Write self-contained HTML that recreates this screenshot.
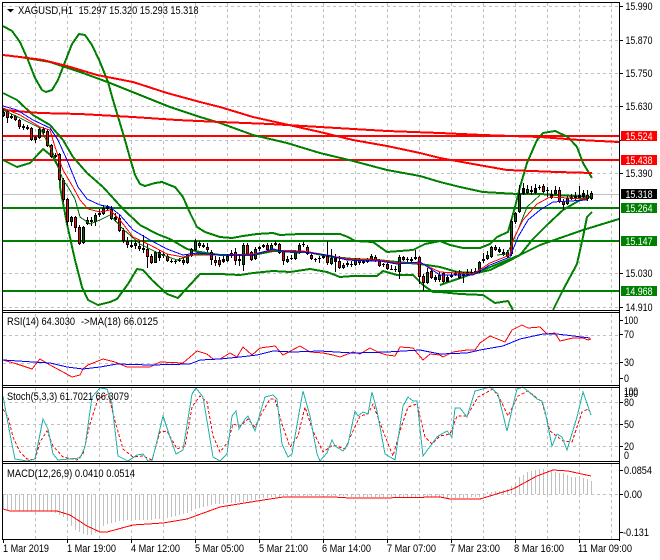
<!DOCTYPE html>
<html><head><meta charset="utf-8"><style>
html,body{margin:0;padding:0;background:#fff;width:660px;height:560px;overflow:hidden}
svg{display:block}
text{font-family:"Liberation Sans",sans-serif;font-size:11px;fill:#000}
.w{fill:#fff}
</style></head><body>
<svg width="660" height="560" viewBox="0 0 660 560" xmlns="http://www.w3.org/2000/svg">
<rect width="660" height="560" fill="#fff"/>
<!-- grid -->
<g stroke="#c0c0c0" stroke-width="1" stroke-dasharray="3 3" fill="none" shape-rendering="crispEdges">
<path d="M35.5 3V311M67.5 3V311M99.5 3V311M131.5 3V311M163.5 3V311M195.5 3V311M227.5 3V311M259.5 3V311M291.5 3V311M323.5 3V311M355.5 3V311M387.5 3V311M419.5 3V311M451.5 3V311M483.5 3V311M515.5 3V311M547.5 3V311M579.5 3V311M611.5 3V311"/>
<path d="M35.5 314V385M67.5 314V385M99.5 314V385M131.5 314V385M163.5 314V385M195.5 314V385M227.5 314V385M259.5 314V385M291.5 314V385M323.5 314V385M355.5 314V385M387.5 314V385M419.5 314V385M451.5 314V385M483.5 314V385M515.5 314V385M547.5 314V385M579.5 314V385M611.5 314V385"/>
<path d="M35.5 388V461M67.5 388V461M99.5 388V461M131.5 388V461M163.5 388V461M195.5 388V461M227.5 388V461M259.5 388V461M291.5 388V461M323.5 388V461M355.5 388V461M387.5 388V461M419.5 388V461M451.5 388V461M483.5 388V461M515.5 388V461M547.5 388V461M579.5 388V461M611.5 388V461"/>
<path d="M35.5 464V539M67.5 464V539M99.5 464V539M131.5 464V539M163.5 464V539M195.5 464V539M227.5 464V539M259.5 464V539M291.5 464V539M323.5 464V539M355.5 464V539M387.5 464V539M419.5 464V539M451.5 464V539M483.5 464V539M515.5 464V539M547.5 464V539M579.5 464V539M611.5 464V539"/>
<path d="M3 6.5H619M3 40.5H619M3 73.5H619M3 106.5H619M3 140.5H619M3 173.5H619M3 273.5H619M3 307.5H619M3 335.5H619M3 363.5H619M3 402.5H619M3 424.5H619M3 446.5H619M3 494.5H619"/>
</g>
<path d="M3 194.5H619" stroke="#c0c0c0" stroke-width="1" shape-rendering="crispEdges"/>
<!-- histogram -->
<path fill="none" stroke="#c0c0c0" stroke-width="1" shape-rendering="crispEdges" d="M3.5 494V509M7.5 494V510M11.5 494V510M15.5 494V510M19.5 494V511M23.5 494V511M27.5 494V511M31.5 494V511M35.5 494V511M39.5 494V511M43.5 494V511M47.5 494V511M51.5 494V512M55.5 494V513M59.5 494V515M63.5 494V517M67.5 494V521M71.5 494V526M75.5 494V530M79.5 494V532M83.5 494V534M87.5 494V535M91.5 494V535M95.5 494V533M99.5 494V530M103.5 494V526M107.5 494V524M111.5 494V523M115.5 494V522M119.5 494V521M123.5 494V521M127.5 494V520M131.5 494V520M135.5 494V520M139.5 494V520M143.5 494V520M147.5 494V520M151.5 494V520M155.5 494V519M159.5 494V519M163.5 494V519M167.5 494V518M171.5 494V517M175.5 494V516M179.5 494V515M183.5 494V514M187.5 494V513M191.5 494V511M195.5 494V509M199.5 494V508M203.5 494V507M207.5 494V506M211.5 494V505M215.5 494V504M219.5 494V504M223.5 494V504M227.5 494V503M231.5 494V503M235.5 494V503M239.5 494V502M243.5 494V502M247.5 494V501M251.5 494V500M255.5 494V500M259.5 494V499M263.5 494V498M267.5 494V498M271.5 494V497M275.5 494V497M279.5 494V497M283.5 494V496M287.5 494V496M291.5 494V496M295.5 494V496M299.5 494V496M303.5 494V496M307.5 494V496M311.5 494V496M315.5 494V496M319.5 494V496M323.5 494V496M327.5 494V496M331.5 494V496M335.5 494V496M339.5 494V496M343.5 494V496M347.5 494V496M351.5 494V497M355.5 494V497M359.5 494V497M363.5 494V497M367.5 494V497M371.5 494V497M375.5 494V497M379.5 494V497M383.5 494V497M387.5 494V497M391.5 494V497M395.5 494V497M399.5 494V497M403.5 494V497M407.5 494V497M411.5 494V497M415.5 494V497M419.5 494V497M423.5 494V497M427.5 494V497M431.5 494V497M435.5 494V497M439.5 494V498M443.5 494V498M447.5 494V498M451.5 494V498M455.5 494V498M459.5 494V498M463.5 494V498M467.5 494V498M471.5 494V497M475.5 494V497M479.5 494V497M483.5 494V493M487.5 494V492M491.5 494V492M495.5 494V491M499.5 494V491M503.5 494V490M507.5 494V489M511.5 494V486M515.5 494V483M519.5 494V477M523.5 494V475M527.5 494V472M531.5 494V471M535.5 494V470M539.5 494V469M543.5 494V469M547.5 494V470M551.5 494V471M555.5 494V472M559.5 494V473M563.5 494V473M567.5 494V475M571.5 494V477M575.5 494V477M579.5 494V477M583.5 494V478M587.5 494V479M591.5 494V481"/>
<!-- horizontal levels -->
<g stroke-width="2" shape-rendering="crispEdges" fill="none">
<path d="M3 136H619M3 160H619" stroke="#f00"/>
<path d="M3 208H619M3 241H619M3 291H619" stroke="#008000"/>
</g>
<!-- long curves -->
<g fill="none" stroke-width="2" shape-rendering="crispEdges" stroke-linejoin="round">
<polyline stroke="#008000" points="3,26 12,31 20,42 28,60 35,78 42,90 46,92 52,90 58,80 65,62 72,44 79,34 85,35 92,45 100,62 108,82 113,100 119,120 125,140 130,158 135,175 140,184 145,186 155,183 162,182 172,186 175,187 183,197 190,213 197,227 205,232 220,237 232,238 243,236 257,234 273,233 280,235 300,234 320,234 340,234 348,237 355,241 373,242 387,252 413,250 425,244 440,241 450,245 463,248 480,248 490,244 497,237 508,232 515,207 520,187 527,163 537,140 543,133 555,131 568,137 577,147 583,163 592,178"/>
<polyline stroke="#008000" points="3,160 17,167 30,163 43,149 53,157 60,170 60,187 67,224 75,260 82,287 88,300 98,305 110,302 117,299 128,284 137,269 143,270 152,280 167,294 178,298 188,287 200,274 220,274 240,275 253,273 273,271 290,272 310,269 327,272 340,277 353,276 377,276 383,271 397,275 413,275 423,285 433,292 440,292 460,294 483,295 495,303 508,301 513,310"/>
<polyline stroke="#008000" points="553,310 563,290 577,264 583,237 587,217 592,212"/>
<polyline stroke="#008000" points="3,93 17,100 33,115 50,125 63,140 73,157 87,173 103,187 123,209 140,225 157,234 170,239 187,249 200,252 220,255 253,255 273,251 307,252 333,257 353,259 377,260 397,262 420,264 440,267 457,272 477,273 490,270 507,262 520,255 533,239 547,225 563,210 580,200 587,197"/>
<polyline stroke="#008000" points="3,55 20,57 50,62 83,73 110,83 140,95 170,107 200,117 220,123 253,135 287,143 320,153 353,161 387,170 420,176 440,182 460,187 483,192 517,194 540,194 590,197"/>
<polyline stroke="#008000" points="440,285 478,272 520,255 540,245 583,230 619,219"/>
<polyline stroke="#f00" points="3,55 20,57 43,60 67,66 97,75 133,82 167,93 200,102 220,107 253,117 280,123 320,132 353,140 387,146 420,153 440,158 473,164 507,170 557,172 592,173"/>
<polyline stroke="#f00" points="3,110 40,113 80,114 133,117 177,120 220,122 270,124 320,127 387,131 440,133 483,135 540,137 580,140 619,142"/>
</g>
<!-- candles -->
<path fill="none" stroke="#000" stroke-width="1" shape-rendering="crispEdges" d="M3.5 108V117M7.5 110V123M11.5 114V119M15.5 115V121M19.5 119V129M23.5 124V130M27.5 125V130M31.5 127V141M35.5 136V143M39.5 127V139M43.5 127V134M47.5 129V147M51.5 144V158M55.5 153V158M59.5 153V181M63.5 178V202M67.5 198V226M71.5 216V226M75.5 216V232M79.5 225V245M83.5 226V244M87.5 217V225M91.5 217V226M95.5 213V226M99.5 209V217M103.5 206V215M107.5 205V211M111.5 206V220M115.5 213V222M119.5 215V232M123.5 228V243M127.5 237V248M131.5 240V248M135.5 240V249M139.5 241V251M143.5 235V253M147.5 244V268M151.5 254V264M155.5 251V263M159.5 250V261M163.5 252V258M167.5 254V262M171.5 259V263M175.5 259V264M179.5 258V262M183.5 257V265M187.5 254V264M191.5 248V257M195.5 239V251M199.5 241V248M203.5 243V248M207.5 243V252M211.5 250V265M215.5 256V266M219.5 257V267M223.5 256V263M227.5 254V262M231.5 250V258M235.5 248V265M239.5 255V266M243.5 243V271M247.5 243V255M251.5 251V261M255.5 247V260M259.5 246V251M263.5 244V248M267.5 243V251M271.5 243V251M275.5 241V246M279.5 243V254M283.5 250V265M287.5 256V263M291.5 255V260M295.5 250V260M299.5 243V254M303.5 242V247M307.5 245V255M311.5 254V260M315.5 258V262M319.5 256V263M323.5 254V259M327.5 241V265M331.5 249V265M335.5 254V272M339.5 256V269M343.5 263V269M347.5 261V267M351.5 261V267M355.5 258V266M359.5 258V265M363.5 259V264M367.5 258V263M371.5 254V261M375.5 255V262M379.5 259V267M383.5 263V267M387.5 262V270M391.5 265V270M395.5 266V272M399.5 255V279M403.5 256V261M407.5 257V262M411.5 257V263M415.5 250V260M419.5 256V284M423.5 274V291M427.5 268V284M431.5 268V279M435.5 275V282M439.5 272V282M443.5 272V283M447.5 275V282M451.5 273V278M455.5 271V276M459.5 270V279M463.5 272V283M467.5 269V276M471.5 269V274M475.5 268V274M479.5 261V273M483.5 253V263M487.5 251V260M491.5 246V258M495.5 245V251M499.5 247V253M503.5 249V256M507.5 250V258M511.5 219V256M515.5 212V224M519.5 185V213M523.5 183V195M527.5 185V194M531.5 186V195M535.5 184V194M539.5 185V190M543.5 184V193M547.5 187V197M551.5 190V199M555.5 186V195M559.5 187V203M563.5 199V210M567.5 196V205M571.5 194V200M575.5 192V200M579.5 186V199M583.5 190V198M587.5 190V201M591.5 191V200"/>
<path fill="none" stroke="#000" stroke-width="3" shape-rendering="crispEdges" d="M3.5 112V116M7.5 111V118M11.5 116V118M15.5 116V120M19.5 120V127M23.5 126V128M27.5 127V129M31.5 128V140M35.5 137V140M39.5 129V138M43.5 129V133M47.5 131V146M51.5 145V157M55.5 155V157M59.5 154V180M63.5 180V200M67.5 199V222M71.5 217V222M75.5 217V228M79.5 227V244M83.5 227V243M87.5 220V224M91.5 220V222M95.5 215V222M99.5 213V215M103.5 208V214M107.5 207V209M111.5 209V219M115.5 217V220M119.5 218V231M123.5 230V241M127.5 241V245M131.5 245V247M135.5 243V246M139.5 246V249M143.5 248V250M147.5 249V257M151.5 256V263M155.5 252V263M159.5 252V258M163.5 254V256M167.5 256V261M171.5 261V262M175.5 261V262M179.5 260V261M183.5 260V263M187.5 255V263M191.5 249V256M195.5 241V250M199.5 243V246M203.5 245V247M207.5 247V250M211.5 252V260M215.5 260V263M219.5 260V265M223.5 259V262M227.5 256V261M231.5 253V256M235.5 252V261M239.5 259V261M243.5 245V265M247.5 245V254M251.5 252V260M255.5 249V259M259.5 247V249M263.5 245V247M267.5 245V250M271.5 245V250M275.5 243V245M279.5 244V253M283.5 251V261M287.5 259V262M291.5 258V259M295.5 252V259M299.5 245V253M303.5 244V245M307.5 247V254M311.5 255V259M315.5 259V260M319.5 258V259M323.5 256V258M327.5 256V263M331.5 258V264M335.5 258V262M339.5 261V268M343.5 265V268M347.5 263V265M351.5 264V265M355.5 260V265M359.5 260V263M363.5 261V263M367.5 259V262M371.5 256V260M375.5 257V261M379.5 261V266M383.5 264V265M387.5 264V269M391.5 269V270M395.5 269V270M399.5 257V272M403.5 257V260M407.5 259V260M411.5 259V261M415.5 257V259M419.5 257V277M423.5 276V283M427.5 272V283M431.5 271V278M435.5 277V280M439.5 275V280M443.5 273V282M447.5 277V282M451.5 275V277M455.5 273V275M459.5 273V278M463.5 274V276M467.5 272V275M471.5 272V273M475.5 271V273M479.5 262V272M483.5 259V261M487.5 255V259M491.5 247V257M495.5 247V250M499.5 249V252M503.5 252V255M507.5 252V257M511.5 221V254M515.5 213V222M519.5 194V212M523.5 188V194M527.5 189V193M531.5 190V192M535.5 188V193M539.5 187V188M543.5 186V192M547.5 190V191M551.5 194V198M555.5 190V194M559.5 190V202M563.5 201V205M567.5 198V204M571.5 197V199M575.5 196V199M579.5 195V198M583.5 193V197M587.5 195V199M591.5 193V199"/>
<path fill="none" stroke="#f00" stroke-width="1" shape-rendering="crispEdges" d="M7.5 112V117M15.5 117V119M19.5 121V126M31.5 129V139M35.5 138V139M47.5 132V145M51.5 146V156M59.5 155V179M63.5 181V199M67.5 200V221M75.5 218V227M79.5 228V243M111.5 210V218M119.5 219V230M123.5 231V240M127.5 242V244M139.5 247V248M147.5 250V256M151.5 257V262M167.5 257V260M183.5 261V262M199.5 244V245M207.5 248V249M211.5 253V259M215.5 261V262M219.5 261V264M235.5 253V260M247.5 246V253M251.5 253V259M267.5 246V249M279.5 245V252M283.5 252V260M307.5 248V253M311.5 256V258M327.5 257V262M339.5 262V267M359.5 261V262M375.5 258V260M379.5 262V265M387.5 265V268M403.5 258V259M419.5 258V276M423.5 277V282M431.5 272V277M443.5 274V281M459.5 274V277M495.5 248V249M507.5 253V256M543.5 187V191M559.5 191V201M563.5 202V204M587.5 196V198"/>
<path fill="none" stroke="#006400" stroke-width="1" shape-rendering="crispEdges" d="M3.5 113V115M39.5 130V137M43.5 130V132M71.5 218V221M83.5 228V242M87.5 221V223M95.5 216V221M103.5 209V213M135.5 244V245M155.5 253V262M187.5 256V262M191.5 250V255M195.5 242V249M227.5 257V260M243.5 246V264M255.5 250V258M271.5 246V249M287.5 260V261M295.5 253V258M299.5 246V252M331.5 259V263M343.5 266V267M355.5 261V264M367.5 260V261M371.5 257V259M399.5 258V271M427.5 273V282M439.5 276V279M479.5 263V271M487.5 256V258M491.5 248V256M511.5 222V253M515.5 214V221M519.5 195V211M527.5 190V192M555.5 191V193M567.5 199V203M591.5 194V198"/>
<!-- MAs -->
<g fill="none" stroke-width="1" shape-rendering="crispEdges">
<polyline stroke="#006400" points="3,110 20,118 40,128 53,153 63,180 68,187 75,199 80,217 90,224 100,220 110,215 123,229 140,244 160,254 177,260 192,255 220,255 253,255 273,251 300,253"/>
<polyline stroke="#006400" points="497,255 507,254 518,230 527,207 540,195"/>
<polyline stroke="#f00" points="3,108 20,115 40,127 50,130 55,147 63,170 73,187 80,200 88,209 100,212 110,210 120,220 133,237 150,245 167,254 183,257 197,254 220,255 253,254 273,250 303,251 327,255 347,259 380,260 397,263 420,263 440,272 473,274 490,263 510,255 513,240 523,220 537,204 550,197 587,199"/>
<polyline stroke="#00f" points="3,106 17,110 33,120 50,128 58,140 67,160 78,187 87,199 100,205 110,207 120,215 133,230 150,240 167,249 183,255 197,253 220,255 240,255 253,255 273,249 287,252 303,252 327,255 347,260 367,261 380,261 397,264 420,262 440,275 453,275 473,275 490,265 510,257 518,237 528,220 540,210 553,202 587,200"/>
</g>
<!-- RSI -->
<g fill="none" stroke-width="1" shape-rendering="crispEdges">
<polyline stroke="#f00" points="3,360 17,364 32,369 40,359 50,365 63,372 72,377 80,375 83,369 88,365 103,359 115,362 127,367 150,367 160,362 183,363 197,351 207,354 213,359 220,359 230,353 237,357 243,347 252,355 260,348 275,346 283,355 300,346 310,352 323,353 333,355 340,357 353,352 360,354 370,348 380,353 387,355 395,356 400,347 413,348 423,360 430,354 440,355 443,357 453,352 467,350 475,350 480,343 490,336 505,342 512,330 522,325 528,328 540,327 547,334 555,333 560,341 573,338 583,338 588,340 591,339"/>
<polyline stroke="#00f" points="3,360 33,362 50,363 67,367 83,369 100,367 117,364 150,365 190,364 200,360 220,359 240,357 257,355 273,351 293,352 320,351 353,353 387,352 420,350 440,354 467,353 480,350 503,346 520,339 543,334 557,334 590,338"/>
</g>
<!-- Stoch -->
<g fill="none" stroke-width="1" shape-rendering="crispEdges">
<polyline stroke="#f00" stroke-dasharray="3 2" points="3,409 8,417 13,437 20,452 27,459 35,460 40,442 47,431 53,446 63,457 77,460 83,454 90,424 98,399 108,394 115,421 123,449 133,457 143,456 152,460 160,432 167,431 177,449 185,446 192,407 200,396 207,402 213,436 220,452 228,442 233,424 240,426 248,419 255,427 263,411 270,399 275,399 282,424 290,447 298,436 305,407 313,431 323,452 333,445 345,449 353,431 360,416 368,414 373,404 383,431 393,456 400,431 408,407 417,404 425,437 432,444 440,436 450,434 457,416 467,416 478,397 493,389 500,399 508,416 518,396 528,391 542,402 550,431 563,441 572,442 582,412 588,409 591,413"/>
<polyline stroke="#20b2aa" points="3,396 10,434 15,459 27,461 35,459 43,419 48,429 53,454 58,460 80,458 85,447 92,397 100,388 107,389 112,404 118,456 128,461 137,455 143,454 148,461 152,461 157,441 163,416 170,437 176,454 183,450 192,394 196,388 203,397 213,457 220,461 227,454 232,416 236,411 239,429 245,419 248,416 255,431 262,407 265,397 273,395 277,399 282,444 288,457 292,454 298,419 303,391 310,416 317,454 320,461 327,453 332,440 335,446 343,451 348,444 355,411 358,416 363,412 368,414 372,392 377,411 385,454 395,460 403,406 408,397 413,401 417,401 423,456 437,437 440,435 447,431 452,437 455,408 460,408 467,417 475,391 483,389 490,387 498,394 507,431 517,389 523,387 537,399 542,401 545,411 552,446 557,434 562,437 567,450 577,417 583,392 591,415"/>
</g>
<!-- MACD -->
<polyline fill="none" stroke="#f00" stroke-width="1" shape-rendering="crispEdges" points="3,509 10,511 47,511 57,511 70,515 87,526 100,532 107,532 133,525 163,523 187,519 220,507 257,501 283,497 333,497 350,498 377,498 440,497 450,499 480,499 513,489 537,476 553,470 568,471 591,476"/>
<!-- frame -->
<g stroke="#000" stroke-width="1" fill="none" shape-rendering="crispEdges">
<path d="M2.5 2V539M2 2.5H620M619.5 2V541M2 310.5H620M2 312.5H620M2 385.5H620M2 387.5H620M2 461.5H620M2 463.5H620M2 539.5H620"/>
<path d="M619 6.5H623M619 40.5H623M619 73.5H623M619 106.5H623M619 140.5H623M619 173.5H623M619 273.5H623M619 307.5H623M619 320.5H623M619 334.5H623M619 362.5H623M619 378.5H623M619 402.5H623M619 424.5H623M619 446.5H623M619 470.5H623M619 494.5H623M619 532.5H623"/>
<path d="M3.5 539V543M67.5 539V543M131.5 539V543M195.5 539V543M259.5 539V543M323.5 539V543M387.5 539V543M451.5 539V543M515.5 539V543M579.5 539V543"/>
</g>
<!-- price boxes -->
<rect x="621" y="131" width="36" height="10" fill="#f00"/>
<rect x="621" y="155" width="36" height="10" fill="#f00"/>
<rect x="621" y="189" width="36" height="10" fill="#000"/>
<rect x="621" y="203" width="36" height="10" fill="#008000"/>
<rect x="621" y="236" width="36" height="10" fill="#008000"/>
<rect x="621" y="286" width="36" height="10" fill="#008000"/>
<!-- top-left -->
<path d="M7 9H14L10.5 12.5Z" fill="#000"/>
<text x="18" y="14" textLength="55" lengthAdjust="spacingAndGlyphs">XAGUSD,H1</text>
<text x="78.5" y="14" textLength="120" lengthAdjust="spacingAndGlyphs">15.297 15.320 15.293 15.318</text>
<!-- axis -->
<g>
<text x="625.5" y="10" textLength="27" lengthAdjust="spacingAndGlyphs">15.990</text>
<text x="625.5" y="44" textLength="27" lengthAdjust="spacingAndGlyphs">15.870</text>
<text x="625.5" y="77" textLength="27" lengthAdjust="spacingAndGlyphs">15.750</text>
<text x="625.5" y="110" textLength="27" lengthAdjust="spacingAndGlyphs">15.630</text>
<text x="625.5" y="177" textLength="27" lengthAdjust="spacingAndGlyphs">15.390</text>
<text x="625.5" y="277" textLength="27" lengthAdjust="spacingAndGlyphs">15.030</text>
<text x="625.5" y="311" textLength="27" lengthAdjust="spacingAndGlyphs">14.910</text>
<text class="w" x="625.5" y="140" textLength="27" lengthAdjust="spacingAndGlyphs">15.524</text>
<text class="w" x="625.5" y="164" textLength="27" lengthAdjust="spacingAndGlyphs">15.438</text>
<text class="w" x="625.5" y="198" textLength="27" lengthAdjust="spacingAndGlyphs">15.318</text>
<text class="w" x="625.5" y="212" textLength="27" lengthAdjust="spacingAndGlyphs">15.264</text>
<text class="w" x="625.5" y="245" textLength="27" lengthAdjust="spacingAndGlyphs">15.147</text>
<text class="w" x="625.5" y="295" textLength="27" lengthAdjust="spacingAndGlyphs">14.968</text>
<text x="624" y="324" textLength="14" lengthAdjust="spacingAndGlyphs">100</text>
<text x="624" y="338" textLength="10" lengthAdjust="spacingAndGlyphs">70</text>
<text x="624" y="366" textLength="10" lengthAdjust="spacingAndGlyphs">30</text>
<text x="624" y="382" textLength="5" lengthAdjust="spacingAndGlyphs">0</text>
<text x="624" y="395" textLength="14" lengthAdjust="spacingAndGlyphs">100</text>
<text x="624" y="397" textLength="14" lengthAdjust="spacingAndGlyphs">100</text>
<text x="624" y="406" textLength="10" lengthAdjust="spacingAndGlyphs">80</text>
<text x="624" y="428" textLength="10" lengthAdjust="spacingAndGlyphs">50</text>
<text x="624" y="450" textLength="10" lengthAdjust="spacingAndGlyphs">20</text>
<text x="624" y="459" textLength="5" lengthAdjust="spacingAndGlyphs">0</text>
<text x="624" y="474" textLength="28" lengthAdjust="spacingAndGlyphs">0.0854</text>
<text x="624" y="498" textLength="18" lengthAdjust="spacingAndGlyphs">0.00</text>
<text x="623" y="536" textLength="26" lengthAdjust="spacingAndGlyphs">-0.131</text>
</g>
<!-- indicator labels -->
<text x="7" y="325" textLength="68" lengthAdjust="spacingAndGlyphs">RSI(14) 64.3030</text>
<text x="81" y="325" textLength="77" lengthAdjust="spacingAndGlyphs">-&gt;MA(18) 66.0125</text>
<text x="7" y="400" textLength="122" lengthAdjust="spacingAndGlyphs">Stoch(5,3,3) 61.7021 66.3079</text>
<text x="7" y="477" textLength="128" lengthAdjust="spacingAndGlyphs">MACD(12,26,9) 0.0410 0.0514</text>
<!-- time -->
<g>
<text x="3" y="552" textLength="46" lengthAdjust="spacingAndGlyphs">1 Mar 2019</text>
<text x="67" y="552" textLength="49" lengthAdjust="spacingAndGlyphs">1 Mar 19:00</text>
<text x="131" y="552" textLength="49" lengthAdjust="spacingAndGlyphs">4 Mar 12:00</text>
<text x="195" y="552" textLength="49" lengthAdjust="spacingAndGlyphs">5 Mar 05:00</text>
<text x="259" y="552" textLength="49" lengthAdjust="spacingAndGlyphs">5 Mar 21:00</text>
<text x="322" y="552" textLength="49" lengthAdjust="spacingAndGlyphs">6 Mar 14:00</text>
<text x="387" y="552" textLength="49" lengthAdjust="spacingAndGlyphs">7 Mar 07:00</text>
<text x="450" y="552" textLength="50" lengthAdjust="spacingAndGlyphs">7 Mar 23:00</text>
<text x="514" y="552" textLength="50" lengthAdjust="spacingAndGlyphs">8 Mar 16:00</text>
<text x="578" y="552" textLength="54" lengthAdjust="spacingAndGlyphs">11 Mar 09:00</text>
</g>
</svg>
</body></html>
